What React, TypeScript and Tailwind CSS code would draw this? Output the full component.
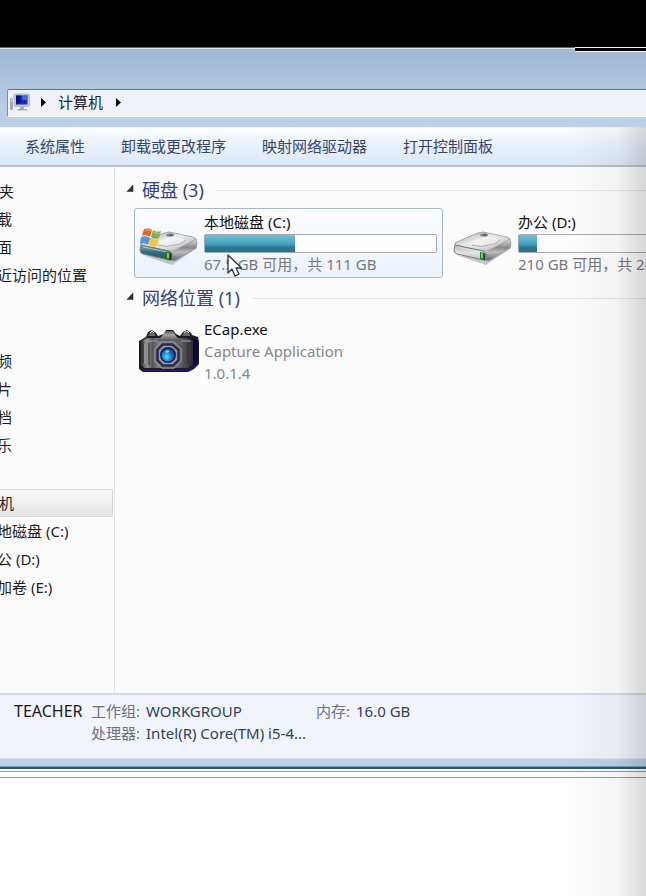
import type { ReactNode } from "react";

const commands = ["系统属性", "卸载或更改程序", "映射网络驱动器", "打开控制面板"];

const places: { label: string; root?: boolean; active?: boolean }[][] = [
  [{ label: "夹", root: true }, { label: "载" }, { label: "面" }, { label: "近访问的位置" }],
  [{ label: "频" }, { label: "片" }, { label: "档" }, { label: "乐" }],
  [
    { label: "机", root: true, active: true },
    { label: "地磁盘 (C:)" },
    { label: "公 (D:)" },
    { label: "加卷 (E:)" },
  ],
];

function ComputerIcon() {
  return (
    <svg className="h-[19px] w-5 shrink-0" viewBox="0 0 20 19" aria-hidden="true">
      <rect x="0" y="5" width="3" height="12" rx="1" fill="#a3a9a3" />
      <rect x="1" y="6" width="1.500" height="3" fill="#d8ddd6" />
      <rect x="4" y="1" width="15.500" height="12.500" rx="1" fill="#c3c9dc" stroke="#9ba3bb" strokeWidth=".6" />
      <rect x="6" y="2.500" width="11.500" height="9" fill="#1b2bb4" />
      <path d="M6 2.500h5l-1 4 2 2-6 3z" fill="#07127e" />
      <path d="M12 2.500h5.500v5l-5.500-1z" fill="#4468e0" />
      <path d="M10 14h4v2h3v1.500H7.500V16H10z" fill="#a4abb9" />
    </svg>
  );
}

function DriveIcon({ system = false }: { system?: boolean }) {
  const id = system ? "sys" : "data";
  return (
    <svg className="h-[41px] w-[61px]" viewBox="0 0 61 41" aria-hidden="true">
      <defs>
        <linearGradient id={`${id}-top`} x1="0" y1="0" x2="1" y2="1">
          <stop offset="0" stopColor="#a9a9ab" />
          <stop offset=".45" stopColor="#ebebec" />
          <stop offset="1" stopColor="#b5b5b7" />
        </linearGradient>
        <linearGradient id={`${id}-front`} x1="0" y1="0" x2="0" y2="1">
          <stop offset="0" stopColor={system ? "#83aab4" : "#b0b1b4"} />
          <stop offset=".5" stopColor={system ? "#2d6c7e" : "#e4e4e7"} />
          <stop offset="1" stopColor={system ? "#2b5060" : "#b8b9bc"} />
        </linearGradient>
        <linearGradient id={`${id}-side`} x1="0" y1="0" x2="0" y2="1">
          <stop offset="0" stopColor="#dededf" />
          <stop offset=".4" stopColor="#88888b" />
          <stop offset=".6" stopColor="#bdbdbf" />
          <stop offset="1" stopColor="#616164" />
        </linearGradient>
      </defs>
      <path d="M3 28L33 38L58 21L57 17L35 33z" fill="#77777b" opacity=".4" />
      <path d="M2 16Q14 10 25 6Q30 4 35 6L54 10Q57 11 57 13L36 23Q33 25 29 24L4 19Q1 18 2 16z" fill={`url(#${id}-top)`} stroke="#8b8b8e" strokeWidth=".7" />
      <path d="M17 17Q18 13 27 11Q41 9 46 13Q44 18 33 20Q22 22 17 17z" fill="#ffffff" opacity=".4" />
      <path d="M19 18Q28 21 36 18Q44 17 46 13" fill="none" stroke="#aaaaad" strokeWidth="1" />
      <ellipse cx="31" cy="8" rx="4" ry="1.700" fill="#8b8b8e" />
      <ellipse cx="32" cy="8" rx="2" ry="1" fill="#606064" />
      <path d="M36 24L57 12Q59 15 57 21L37 33Q33 35 33 32V26z" fill={`url(#${id}-side)`} stroke="#88888b" strokeWidth=".6" />
      <path d="M2 18L30 24Q33 25 33 27V32Q33 34 30 33L4 27Q1 26 1 23z" fill={`url(#${id}-front)`} stroke="#77797d" strokeWidth="1" />
      <path d="M4 20L28 25Q31 26 31 28V31" fill="none" stroke="#f0f3f3" strokeWidth=".8" opacity=".7" />
      <path d="M27 25L32 26V33L27 32z" fill="#167a20" />
      <path d="M28 26L30 26.500V31L28 31z" fill="#80d942" />
      <path d="M31.500 27V33" stroke="#1b332a" strokeWidth="1.500" />
      {system && (
        <g>
          <path d="M5 2Q10 0 13 3L11 10Q7 7 3 9z" fill="#df6535" />
          <path d="M14 3Q18 6 22 4L20 11Q16 13 12 10z" fill="#82ae4c" />
          <path d="M2 10Q7 8 11 11L9 18Q5 15 1 17z" fill="#4d99d8" />
          <path d="M12 11Q16 14 20 12L18 19Q14 21 10 18z" fill="#edc643" />
          <path d="M6 3Q10 2 12 4M15 5Q18 7 20 6" fill="none" stroke="#ffd2a0" strokeWidth="1" opacity=".7" />
        </g>
      )}
    </svg>
  );
}

function CameraIcon() {
  return (
    <svg className="h-[50px] w-[61px]" viewBox="0 0 61 50" aria-hidden="true">
      <defs>
        <linearGradient id="camera-body" x1="0" y1="0" x2="1" y2="0">
          <stop offset="0" stopColor="#343438" />
          <stop offset=".12" stopColor="#929294" />
          <stop offset=".22" stopColor="#55555a" />
          <stop offset=".35" stopColor="#7d7d81" />
          <stop offset=".75" stopColor="#606065" />
          <stop offset="1" stopColor="#2b2b2f" />
        </linearGradient>
        <radialGradient id="camera-lens" cx=".4" cy=".65" r=".65">
          <stop offset="0" stopColor="#4be4fb" />
          <stop offset=".5" stopColor="#178bd5" />
          <stop offset="1" stopColor="#123789" />
        </radialGradient>
        <linearGradient id="camera-prism" x1="0" y1="0" x2="0" y2="1">
          <stop offset="0" stopColor="#5c5c5f" />
          <stop offset=".4" stopColor="#a1a1a3" />
          <stop offset="1" stopColor="#505054" />
        </linearGradient>
      </defs>
      <path d="M0 15L7 11L9 6L13 4L17 7L19 10L25 8L27 4H34L37 8L41 10L44 6L48 4L52 7L53 9L59 11L60 16V38L55 43L49 46H4L0 43z" fill="#1b1b20" />
      <path d="M2 15L8 12H48L54 15V38L49 42H5L2 39z" fill="url(#camera-body)" />
      <path d="M54 13L59 14V36L54 40z" fill="#0c063e" />
      <path d="M4 44H50L57 38" fill="none" stroke="#21127c" strokeWidth="2" />
      <path d="M27 5H34L37 10L42 15H18L23 10z" fill="url(#camera-prism)" />
      <path d="M9 10L11 7L13 5L16 8L17 10zM43 10L45 6L48 5L51 8V10z" fill="#68686b" />
      <path d="M11 7L13 5L15 7M45 7L48 5L50 7" fill="none" stroke="#d5d5d5" strokeWidth="1" />
      <path d="M5 15H18M42 15H52" stroke="#a5a5a6" strokeWidth="1" />
      <path d="M4 17V37M10 17V39M49 17V38" stroke="#303034" strokeWidth="1" />
      <path d="M6 17V38" stroke="#a7a7a8" strokeWidth="2" opacity=".6" />
      <path d="M23 16H34L42 23V35L35 42H23L16 35V23z" fill="#3e3e43" stroke="#929295" strokeWidth="1.500" />
      <path d="M24 19H33L39 24V34L34 39H24L19 34V24z" fill="#9a9ba1" stroke="#25235f" strokeWidth="1.500" />
      <circle cx="29" cy="29" r="8" fill="#151b53" />
      <circle cx="29" cy="29" r="6.500" fill="url(#camera-lens)" />
      <path d="M26 26L28 24L31 25L28 27z" fill="#75d9ec" />
    </svg>
  );
}

function Group({ title, children }: { title: string; children: ReactNode }) {
  return (
    <section>
      <h2 className="flex h-9 items-center text-lg text-[#34427f]">
        <svg className="mr-2 mb-1 h-2 w-2 shrink-0" viewBox="0 0 8 8" aria-hidden="true">
          <path d="M7 1V7.500H1z" fill="#303030" stroke="#303030" strokeWidth=".6" />
        </svg>
        <span className="whitespace-nowrap">{title}</span>
        <span className="ml-3 h-px flex-1 bg-[#e6e6e8]" />
      </h2>
      <div className="ml-2 flex gap-[5px]">{children}</div>
    </section>
  );
}

function Tile({ icon, selected = false, children }: { icon: ReactNode; selected?: boolean; children: ReactNode }) {
  return (
    <article
      className={`flex h-[70px] w-[309px] shrink-0 items-center gap-1 rounded-[3px] border px-1 leading-[22px] ${
        selected
          ? "border-[#a3b8cf] bg-linear-to-b from-[#fbfcfd] to-[#ebf2fc]"
          : "border-transparent"
      }`}
    >
      <div className="flex w-[61px] shrink-0 items-center">{icon}</div>
      <div className="min-w-0 flex-1 whitespace-nowrap">{children}</div>
    </article>
  );
}

function Drive({ name, used, detail, system }: { name: string; used: number; detail: string; system?: boolean }) {
  return (
    <Tile selected={system} icon={<div className="pt-2"><DriveIcon system={system} /></div>}>
      <h3 className="leading-5 text-[#111]">{name}</h3>
      <div
        role="meter"
        aria-label={name}
        aria-valuemin={0}
        aria-valuemax={100}
        aria-valuenow={used}
        className="mt-[2px] mr-px h-[19px] rounded-xs border border-[#a9a9ac] bg-[#fdfdfd]"
      >
        <div
          className="h-full bg-linear-to-b from-[#6fc0d8] from-0% via-[#4aa2bd] via-50% to-[#3a9cb8] shadow-[inset_0_-8px_3px_-2px_#27758f]"
          style={{ width: `${used}%` }}
        />
      </div>
      <p className="text-[#77787b]">{detail}</p>
    </Tile>
  );
}

export default function App() {
  return (
    <div className="relative min-h-screen overflow-hidden bg-white font-['Noto_Sans','Noto_Sans_CJK_SC',sans-serif] text-[15px] text-[#1c1c1e]">
      <div className="h-[47px] bg-black" />
      <div className="flex h-[5px] border-t border-[#60656a] bg-[#a4bad3]">
        <div className="h-px flex-1 bg-[#dce8f3]" />
        <div className="-mt-px h-[5px] w-[11%] border-y border-[#edf2f7] bg-black" />
      </div>

      <header className="bg-linear-to-b from-[#a2b9d3] to-[#bfd1e9] pt-[37px] pb-[10px]">
        <nav
          aria-label="地址"
          className="ml-[7px] flex h-[28px] items-center rounded-l-xs border border-r-0 border-t-[#62738a] border-b-white border-l-[#7b8da4] bg-linear-to-b from-[#edf2fb] to-[#f0f1f5] pb-[2px] pl-[2px]"
        >
          <ComputerIcon />
          <svg className="mr-3 ml-[11px] h-[9px] w-[5px]" viewBox="0 0 5 9" aria-hidden="true">
            <path d="M0 0L5 4.500L0 9z" fill="#080808" />
          </svg>
          <button type="button" className="text-[#20232b]">计算机</button>
          <svg className="ml-[13px] h-[9px] w-[5px]" viewBox="0 0 5 9" aria-hidden="true">
            <path d="M0 0L5 4.500L0 9z" fill="#080808" />
          </svg>
        </nav>
      </header>

      <div className="flex h-10 items-center gap-9 border-t border-b-2 border-t-[#f2f7fd] border-b-[#b4c1d2] bg-linear-to-b from-[#fbfdff] via-[#e9f0fb] via-50% to-[#dde8f7] pl-[25px] whitespace-nowrap text-[#34456a]">
        {commands.map((command) => (
          <button key={command} type="button">{command}</button>
        ))}
      </div>

      <div className="flex bg-[#fcfcfd]">
        <aside className="w-[115px] shrink-0 border-r border-[#dae2f0] pt-[10px] pr-px pb-[92px]">
          {places.map((group, index) => (
            <ul key={index} className={index === 1 ? "mt-[58px]" : index === 2 ? "mt-[30px]" : ""}>
              {group.map((place) => (
                <li
                  key={place.label}
                  className={`h-7 ${
                    place.active
                      ? "rounded-r-xs border border-l-0 border-[#d6d6d8] bg-linear-to-b from-[#f9f9f9] to-[#e4e4e5]"
                      : ""
                  }`}
                >
                  <a
                    href="#"
                    className={`flex h-full items-center whitespace-nowrap ${place.root ? "-ml-px" : "-ml-[3px]"}`}
                  >
                    {place.label}
                  </a>
                </li>
              ))}
            </ul>
          ))}
        </aside>

        <main className="min-w-0 flex-1 pt-[5px] pl-[11px]">
          <Group title="硬盘 (3)">
            <Drive name="本地磁盘 (C:)" used={39} detail="67.5 GB 可用，共 111 GB" system />
            <Drive name="办公 (D:)" used={8} detail="210 GB 可用，共 244 GB" />
          </Group>
          <div className="h-[2px]" />
          <Group title="网络位置 (1)">
            <Tile icon={<CameraIcon />}>
              <h3 className="text-[#111]">ECap.exe</h3>
              <p className="text-[#85868a]">Capture Application</p>
              <p className="text-[#85868a]">1.0.1.4</p>
            </Tile>
          </Group>
        </main>
      </div>

      <footer className="border-b border-[#dce5f1] bg-[#f1f5fb]">
        <div className="flex h-[65px] border-t-2 border-[#d0dae8] pt-[5px] pl-[14px] leading-[22px] whitespace-nowrap text-[#30405c]">
          <strong className="w-[77px] text-base leading-[22px] font-normal text-[#17191d]">TEACHER</strong>
          <dl className="w-[225px]">
            <div className="flex gap-[6px]"><dt className="text-[#697184]">工作组:</dt><dd>WORKGROUP</dd></div>
            <div className="flex gap-[6px]"><dt className="text-[#697184]">处理器:</dt><dd>Intel(R) Core(TM) i5-4...</dd></div>
          </dl>
          <dl>
            <div className="flex gap-[6px]"><dt className="text-[#697184]">内存:</dt><dd>16.0 GB</dd></div>
          </dl>
        </div>
      </footer>
      <div className="h-[10px] border-b-2 border-[#355767] bg-[#bfcfe7] shadow-[inset_0_-1px_0_#74a4b8]" />
      <div className="mt-[2px] h-[7px] border-y border-[#98989b]" />

      <svg className="absolute top-[254px] left-[227px] h-[24px] w-[16px]" viewBox="0 0 16 24" aria-hidden="true">
        <path d="M1 1V19L5 15L8 22L12 20L9 14H14.500z" fill="#fff" stroke="#303238" strokeWidth="1.300" strokeLinejoin="round" />
      </svg>
      <div className="pointer-events-none absolute top-[127px] right-0 bottom-0 w-20 bg-linear-to-r from-transparent via-black/4 via-65% to-black/15" />
    </div>
  );
}
